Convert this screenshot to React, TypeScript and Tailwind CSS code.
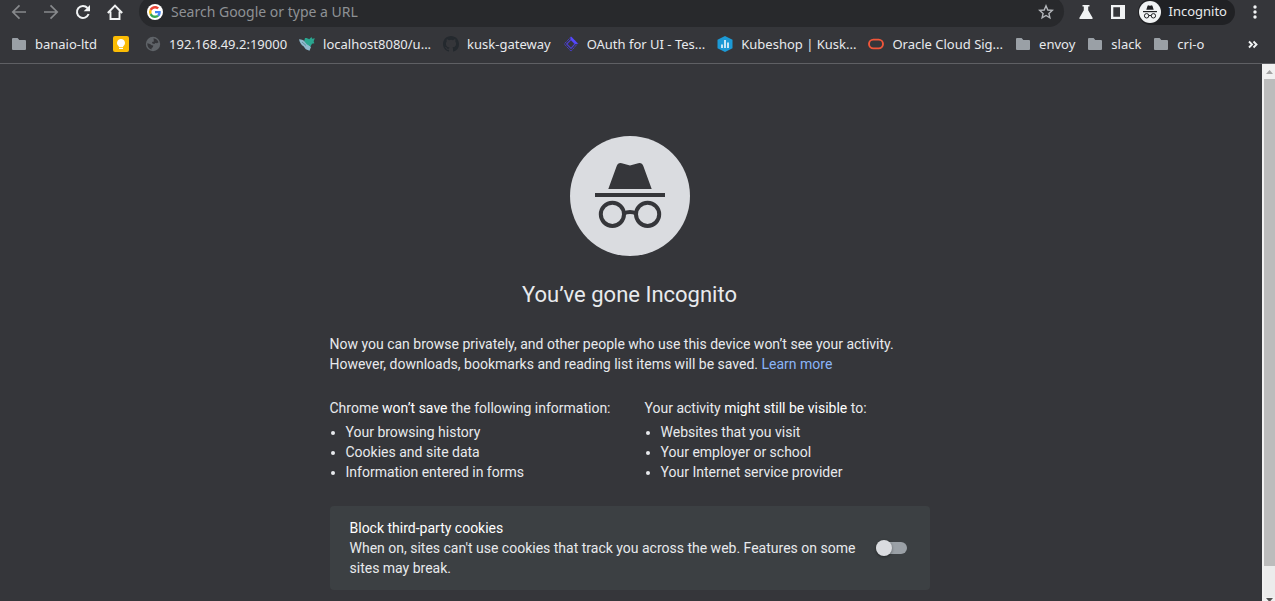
import type { ReactNode } from "react";

function IncognitoMark({ className, disc, ink }: { className: string; disc: string; ink: string }) {
  return (
    <svg viewBox="0 0 120 120" className={className} aria-hidden="true">
      <circle cx="60" cy="60" r="60" fill={disc} />
      <path d="M38.3 53 46.7 30Q48 26.3 51.8 27.2L60 29.6l8.2-2.4Q72 26.3 73.3 30L81.7 53Z" fill={ink} />
      <path d="M25 57h70v4H25z" fill={ink} />
      <g fill="none" stroke={ink} strokeWidth="4">
        <circle cx="42.4" cy="78.3" r="11.6" />
        <circle cx="77.6" cy="78.3" r="11.6" />
        <path d="M53.5 77.6q6.500-3 13 0" />
      </g>
    </svg>
  );
}

function SmallIncognito() {
  return (
    <svg viewBox="0 0 22 22" className="size-[22px] shrink-0" aria-hidden="true">
      <circle cx="11" cy="11" r="11" fill="#f1f3f4" />
      <path d="M7.300 8.800 8.500 5q.3-.9 1.200-.6l1.300.4 1.300-.4q.9-.3 1.200.6l1.200 3.800Z" fill="#202124" />
      <path d="M4 10h14v1.200H4z" fill="#202124" />
      <g fill="none" stroke="#202124" strokeWidth="1">
        <circle cx="7.600" cy="14.800" r="2.200" />
        <circle cx="14.400" cy="14.800" r="2.200" />
        <path d="M9.800 14.700q1.200-.7 2.400 0" />
      </g>
    </svg>
  );
}

const Folder = () => (
  <svg viewBox="0 0 16 16" className="size-4 shrink-0" aria-hidden="true">
    <path d="M2 2h4.600l1.700 2H14a1 1 0 0 1 1 1v8a1 1 0 0 1-1 1H2a1 1 0 0 1-1-1V3a1 1 0 0 1 1-1Z" fill="#9aa0a6" />
  </svg>
);

const Keep = () => (
  <svg viewBox="0 0 16 16" className="size-4 shrink-0" aria-hidden="true">
    <rect width="16" height="16" rx="2" fill="#fbbc04" />
    <path d="M8 3a4 4 0 0 0-2.200 7.300V11h4.400v-.7A4 4 0 0 0 8 3ZM6 11.800h4v1.300H6z" fill="#fff" />
  </svg>
);

const Globe = () => (
  <svg viewBox="0 0 16 16" className="size-4 shrink-0" aria-hidden="true">
    <circle cx="8" cy="8" r="7.200" fill="#5f6368" />
    <path d="M2.300 7.300 5 8l1.700 1.200 1.600.3-.4 1.700-1.300.8v1.600C4 13 2.200 10.800 2.300 7.300ZM8.500 2.300c2.400.2 4.300 1.700 5 3.900L12 7.300l-1.700-.4-1 1-1.900-.3-.4-1.500 1.900-.7Z" fill="#35363a" />
  </svg>
);

const Bird = () => (
  <svg viewBox="0 0 16 16" className="size-4 shrink-0" aria-hidden="true">
    <path d="M0 3.200c2.600 0 5 1 7 3.200l5 4.600-1.500 3.800-3.700-1.500-2.300-3C2.500 9 .5 6.500 0 3.200Z" fill="#8fb9cd" />
    <path d="M6 2c1.500-.4 3 .3 4.200 1.300L12.500 1l.6 1.700 2.700-.4-1.200 2.900.8 2-2.400.5-1.500 2.800L7.800 8.300 5.200 5Z" fill="#2aa58f" />
    <path d="m3 6 4 3.500" stroke="#4b7d8c" strokeWidth=".7" fill="none" />
  </svg>
);

const GitHub = () => (
  <svg viewBox="0 0 16 16" className="size-4 shrink-0" aria-hidden="true">
    <path fill="#24292e" d="M8 0C3.580 0 0 3.580 0 8c0 3.540 2.290 6.530 5.470 7.590.4.070.55-.17.55-.38 0-.19-.01-.82-.01-1.490-2.010.37-2.530-.49-2.690-.94-.09-.23-.48-.94-.82-1.130-.28-.15-.68-.52-.01-.53.63-.01 1.080.58 1.230.82.72 1.210 1.870.87 2.330.66.070-.52.280-.87.510-1.070-1.780-.2-3.640-.89-3.640-3.950 0-.87.310-1.590.82-2.150-.08-.2-.36-1.020.080-2.120 0 0 .67-.21 2.200.82a7.600 7.600 0 0 1 4 0c1.530-1.040 2.200-.82 2.200-.82.44 1.100.16 1.920.080 2.120.51.56.82 1.270.82 2.150 0 3.070-1.870 3.750-3.650 3.950.29.25.54.73.54 1.480 0 1.070-.01 1.930-.01 2.200 0 .21.15.46.55.38A8.010 8.010 0 0 0 16 8c0-4.420-3.580-8-8-8Z" />
  </svg>
);

const Diamond = () => (
  <svg viewBox="0 0 16 16" className="size-4 shrink-0" aria-hidden="true">
    <path d="M8 .8 14.700 7.500 8 15.200 1.300 8Z" fill="none" stroke="#4b3fd0" strokeWidth="1" strokeDasharray="1.600 .6" />
    <path d="M8 3.500 12 7.800 8 12.300 3.700 8Z" fill="none" stroke="#4b3fd0" strokeWidth="1.200" />
    <path d="M8 .5 14.800 7.400l-2.300.8L7.300 3Z" fill="#5548ff" />
  </svg>
);

const Kubeshop = () => (
  <svg viewBox="0 0 16 16" className="size-4 shrink-0" aria-hidden="true">
    <path d="M8 0 15.500 3.800v8.400L8 16 .5 12.200V3.800Z" fill="#1c9ad6" />
    <path d="M5 8.500V12M8 4v8M11 6.500V12" stroke="#fff" strokeWidth="1.500" />
  </svg>
);

const Oracle = () => (
  <svg viewBox="0 0 16 16" className="size-4 shrink-0" aria-hidden="true">
    <rect x="1" y="3.600" width="14" height="8.800" rx="4.400" fill="none" stroke="#f0563a" strokeWidth="1.900" />
  </svg>
);

const GoogleLogo = () => (
  <svg viewBox="0 0 16 16" className="size-4 shrink-0" aria-hidden="true">
    <circle cx="8" cy="8" r="8" fill="#fff" />
    <g transform="translate(2 2) scale(.25)">
      <path fill="#EA4335" d="M24 9.500c3.540 0 6.710 1.220 9.210 3.600l6.850-6.850C35.900 2.380 30.470 0 24 0 14.620 0 6.510 5.380 2.560 13.220l7.980 6.190C12.430 13.720 17.740 9.500 24 9.500Z" />
      <path fill="#4285F4" d="M46.980 24.550c0-1.570-.15-3.090-.38-4.550H24v9.020h12.940c-.58 2.960-2.260 5.480-4.780 7.180l7.730 6c4.510-4.180 7.090-10.360 7.090-17.650Z" />
      <path fill="#FBBC05" d="M10.530 28.590a14.500 14.500 0 0 1 0-9.180l-7.980-6.190a24 24 0 0 0 0 21.560l7.980-6.190Z" />
      <path fill="#34A853" d="M24 48c6.480 0 11.930-2.130 15.890-5.810l-7.730-6c-2.150 1.450-4.920 2.300-8.160 2.300-6.260 0-11.570-4.220-13.470-9.910l-7.980 6.190C6.510 42.620 14.620 48 24 48Z" />
    </g>
  </svg>
);

const bookmarks: { icon: ReactNode; label?: string; name?: string }[] = [
  { icon: <Folder />, label: "banaio-ltd" },
  { icon: <Keep />, name: "Google Keep" },
  { icon: <Globe />, label: "192.168.49.2:19000" },
  { icon: <Bird />, label: "localhost8080/u..." },
  { icon: <GitHub />, label: "kusk-gateway" },
  { icon: <Diamond />, label: "OAuth for UI - Tes..." },
  { icon: <Kubeshop />, label: "Kubeshop | Kusk..." },
  { icon: <Oracle />, label: "Oracle Cloud Sig..." },
  { icon: <Folder />, label: "envoy" },
  { icon: <Folder />, label: "slack" },
  { icon: <Folder />, label: "cri-o" },
];

function ToolButton({ name, color, children }: { name: string; color: string; children: ReactNode }) {
  return (
    <button type="button" aria-label={name} className={`flex size-4 shrink-0 items-center justify-center ${color}`}>
      <svg viewBox="0 0 16 16" className="size-4" fill="none" stroke="currentColor" strokeWidth="2" aria-hidden="true">
        {children}
      </svg>
    </button>
  );
}

function Toolbar() {
  return (
    <div className="-mt-1 flex h-[31px] shrink-0 items-center pr-3 pl-[11px]">
      <div className="flex gap-4">
        <ToolButton name="Back" color="text-[#87898c]">
          <path d="M15 8H2M8.500 1.300 1.800 8l6.700 6.700" strokeWidth="1.700" />
        </ToolButton>
        <ToolButton name="Forward" color="text-[#87898c]">
          <path d="M1 8h13M7.500 1.300 14.200 8l-6.700 6.700" strokeWidth="1.700" />
        </ToolButton>
        <ToolButton name="Reload" color="text-[#f1f3f4]">
          <path d="M13.600 10A6 6 0 1 1 12.500 4" />
          <path d="M15 1v6.300H8.700Z" fill="currentColor" stroke="none" />
        </ToolButton>
        <ToolButton name="Home" color="text-[#f1f3f4]">
          <path d="M3.500 7.500V15h9V7.500M.8 9 8 1.500 15.200 9" strokeWidth="1.900" />
        </ToolButton>
      </div>
      <div className="ml-4 flex h-full min-w-0 flex-1 items-center gap-2 rounded-full bg-[#28292c] pr-[10px] pl-2">
        <GoogleLogo />
        <input
          type="text"
          aria-label="Address and search bar"
          placeholder="Search Google or type a URL"
          className="min-w-0 flex-1 bg-transparent text-[14px] leading-5 text-[#e8eaed] outline-none placeholder:text-[#8e9195]"
        />
        <ToolButton name="Bookmark this tab" color="text-[#b4b7bb]">
          <path d="m8 1.800 1.800 4.200 4.500.4-3.400 3 1 4.400L8 11.500l-3.900 2.300 1-4.400-3.400-3 4.500-.4Z" strokeWidth="1.400" />
        </ToolButton>
      </div>
      <div className="ml-[14px] flex items-center gap-4">
        <ToolButton name="Experiments" color="text-[#f1f3f4]">
          <path d="M4.500 1h7v1.500h-1.300v3.700L14.700 14q.3 1-1 1H2.300q-1.300 0-1-1L5.800 6.200V2.500H4.500Z" fill="currentColor" stroke="none" />
        </ToolButton>
        <ToolButton name="Side panel" color="text-[#f1f3f4]">
          <path fillRule="evenodd" d="M1 1h14v14H1Zm2.300 2.300v9.400H10V3.300Z" fill="currentColor" stroke="none" />
        </ToolButton>
      </div>
      <button
        type="button"
        className="ml-3 flex h-[26px] items-center gap-2 rounded-full bg-[#202124] pr-2 pl-px text-[13px] text-[#e8eaed]"
      >
        <SmallIncognito />
        Incognito
      </button>
      <div className="ml-3 flex">
        <ToolButton name="Menu" color="text-[#f1f3f4]">
          <g fill="currentColor" stroke="none">
            <circle cx="8" cy="3" r="1.700" />
            <circle cx="8" cy="8" r="1.700" />
            <circle cx="8" cy="13" r="1.700" />
          </g>
        </ToolButton>
      </div>
    </div>
  );
}

function BookmarksBar() {
  return (
    <nav
      aria-label="Bookmarks"
      className="flex h-[37px] shrink-0 items-center border-b border-[#5f6064] pr-[14px] pb-[2px] pl-[11px]"
    >
      <div className="flex min-w-0 flex-1 items-center gap-3 overflow-hidden">
        {bookmarks.map((b, i) => (
          <a
            key={i}
            href="#"
            aria-label={b.name}
            className={`flex shrink-0 items-center gap-2 text-[13px] leading-5 whitespace-nowrap text-[#e8eaed] ${b.label ? "" : "px-1"}`}
          >
            {b.icon}
            {b.label}
          </a>
        ))}
      </div>
      <ToolButton name="More bookmarks" color="text-[#f1f3f4]">
        <path d="m4 5.500 3 3-3 3M8.500 5.500l3 3-3 3" strokeWidth="1.900" />
      </ToolButton>
    </nav>
  );
}

function InfoList({ title, items }: { title: ReactNode; items: string[] }) {
  return (
    <section className="flex-1">
      <h2>{title}</h2>
      <ul className="mt-1 list-disc pl-4">
        {items.map((item) => (
          <li key={item}>{item}</li>
        ))}
      </ul>
    </section>
  );
}

function Scrollbar() {
  return (
    <div aria-hidden="true" className="flex w-[13px] shrink-0 flex-col overflow-hidden bg-[#f1f1f1] pl-[2px]">
      <svg viewBox="0 0 11 15" className="h-[15px] w-[11px] shrink-0">
        <path d="m2 10 3.500-4L9 10Z" fill="#a3a3a3" />
      </svg>
      <div className="min-h-0 flex-1 bg-[#bcbcbc]" />
      <div className="h-[31px] shrink-0 bg-[#ececec]" />
      <svg viewBox="0 0 11 4" className="h-1 w-[11px] shrink-0">
        <path d="M2 1h7L5.500 5Z" fill="#505050" />
      </svg>
    </div>
  );
}

export default function App() {
  return (
    <div className="flex h-screen flex-col overflow-hidden bg-[#35363a]">
      <header className="flex shrink-0 flex-col overflow-hidden font-['Noto_Sans',sans-serif]">
        <Toolbar />
        <BookmarksBar />
      </header>
      <div className="flex min-h-0 flex-1">
        <main className="min-w-0 flex-1 overflow-hidden pr-[3px] font-[Roboto,sans-serif] text-[14px] leading-5 text-[#e8eaed]">
          <div className="mx-auto max-w-[600px] pt-[72px]">
            <IncognitoMark className="mx-auto size-[120px]" disc="#dadce0" ink="#35363a" />
            <h1 className="mt-[25px] text-center text-[22px] leading-7">You’ve gone Incognito</h1>
            <p className="mt-[25px]">
              Now you can browse privately, and other people who use this device won’t see your activity. However,
              downloads, bookmarks and reading list items will be saved.{" "}
              <a href="#" className="text-[#8ab4f8]">
                Learn more
              </a>
            </p>
            <div className="mt-6 flex gap-[30px]">
              <InfoList
                title={
                  <>
                    Chrome <em className="text-white not-italic">won’t save</em> the following information:
                  </>
                }
                items={["Your browsing history", "Cookies and site data", "Information entered in forms"]}
              />
              <InfoList
                title={
                  <>
                    Your activity <em className="text-white not-italic">might still be visible</em> to:
                  </>
                }
                items={["Websites that you visit", "Your employer or school", "Your Internet service provider"]}
              />
            </div>
            <label className="mt-6 flex items-center gap-4 rounded bg-[#3c4043] py-3 pr-[23px] pl-5">
              <span className="flex-1">
                <span className="block text-white">Block third-party cookies</span>
                <span className="block">
                  When on, sites can't use cookies that track you across the web. Features on some sites may break.
                </span>
              </span>
              <input
                type="checkbox"
                role="switch"
                className="flex h-3 w-[31px] shrink-0 appearance-none items-center rounded-full bg-[#9aa0a6] before:size-4 before:rounded-full before:bg-[#dadce0] before:shadow-[0_1px_3px_rgba(0,0,0,0.4)] checked:justify-end"
              />
            </label>
          </div>
        </main>
        <Scrollbar />
      </div>
    </div>
  );
}
